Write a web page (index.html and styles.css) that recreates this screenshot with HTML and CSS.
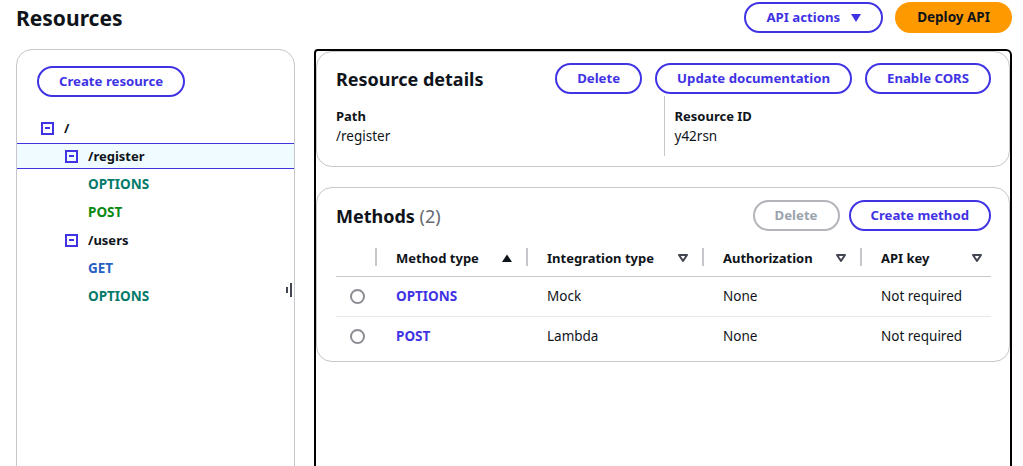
FILE: index.html
```html
<!DOCTYPE html>
<html lang="en">
<head>
<meta charset="utf-8">
<title>Resources</title>
<link rel="stylesheet" href="styles.css">
</head>
<body>
<div class="page">
  <header class="top">
    <h1 class="title">Resources</h1>
    <div class="actions">
      <button class="btn">API actions
        <svg class="caret" width="10" height="8" viewBox="0 0 10 8"><path d="M0 0h10L5 8z" fill="currentColor"/></svg>
      </button>
      <button class="btn primary">Deploy API</button>
    </div>
  </header>

  <div class="layout">
    <aside class="nav-panel">
      <button class="btn create">Create resource</button>
      <ul class="tree">
        <li class="node lvl0"><span class="toggle"></span><span class="res">/</span></li>
        <li class="node lvl1 selected"><span class="toggle"></span><span class="res">/register</span></li>
        <li class="node method m-options">OPTIONS</li>
        <li class="node method m-post">POST</li>
        <li class="node lvl1"><span class="toggle"></span><span class="res">/users</span></li>
        <li class="node method m-get">GET</li>
        <li class="node method m-options">OPTIONS</li>
      </ul>
      <span class="resize-handle"><i class="bar short"></i><i class="bar tall"></i></span>
    </aside>

    <main class="detail-panel">
      <section class="card details">
        <div class="card-head">
          <h2 class="card-title">Resource details</h2>
          <div class="btn-group">
            <button class="btn">Delete</button>
            <button class="btn">Update documentation</button>
            <button class="btn">Enable CORS</button>
          </div>
        </div>
        <div class="kv">
          <div class="kv-col">
            <div class="kv-label">Path</div>
            <div class="kv-value">/register</div>
          </div>
          <div class="kv-col divided">
            <div class="kv-label">Resource ID</div>
            <div class="kv-value">y42rsn</div>
          </div>
        </div>
      </section>

      <section class="card methods">
        <div class="card-head">
          <h2 class="card-title">Methods <span class="count">(2)</span></h2>
          <div class="btn-group tight">
            <button class="btn disabled">Delete</button>
            <button class="btn">Create method</button>
          </div>
        </div>
        <table class="table">
          <colgroup>
            <col class="c-sel"><col class="c-type"><col class="c-int"><col class="c-auth"><col class="c-key">
          </colgroup>
          <thead>
            <tr>
              <th></th>
              <th><div class="th-inner"><span>Method type</span>
                <svg class="sort" width="12" height="10" viewBox="0 0 12 10"><path d="M1 9L6 1.5 11 9z" fill="#0f141a"/></svg></div></th>
              <th><div class="th-inner"><span>Integration type</span>
                <svg class="sort" width="12" height="10" viewBox="0 0 12 10"><path d="M2 2h8L6 8z" fill="none" stroke="#424650" stroke-width="2" stroke-linejoin="round"/></svg></div></th>
              <th><div class="th-inner"><span>Authorization</span>
                <svg class="sort" width="12" height="10" viewBox="0 0 12 10"><path d="M2 2h8L6 8z" fill="none" stroke="#424650" stroke-width="2" stroke-linejoin="round"/></svg></div></th>
              <th class="last"><div class="th-inner"><span>API key</span>
                <svg class="sort" width="12" height="10" viewBox="0 0 12 10"><path d="M2 2h8L6 8z" fill="none" stroke="#424650" stroke-width="2" stroke-linejoin="round"/></svg></div></th>
            </tr>
          </thead>
          <tbody>
            <tr>
              <td class="sel"><span class="radio"></span></td>
              <td><a class="link">OPTIONS</a></td>
              <td>Mock</td>
              <td>None</td>
              <td>Not required</td>
            </tr>
            <tr>
              <td class="sel"><span class="radio"></span></td>
              <td><a class="link">POST</a></td>
              <td>Lambda</td>
              <td>None</td>
              <td>Not required</td>
            </tr>
          </tbody>
        </table>
      </section>
    </main>
  </div>
</div>
</body>
</html>
```

FILE: styles.css
```css
* { box-sizing: border-box; }

html, body {
  margin: 0;
  padding: 0;
}

body {
  font-family: "Noto Sans", "Open Sans", sans-serif;
  font-size: 13.5px;
  line-height: 20px;
  color: #0f141a;
  background: #ffffff;
  height: 466px;
  overflow: hidden;
}

/* ---------- header ---------- */
.top {
  display: flex;
  justify-content: space-between;
  align-items: center;
  height: 35px;
  padding: 0 11px 0 16px;
}

.title {
  margin: 0;
  font-size: 21px;
  line-height: 28px;
  font-weight: 700;
}

.actions {
  display: flex;
  gap: 12px;
}

/* ---------- buttons ---------- */
.btn {
  display: inline-flex;
  align-items: center;
  justify-content: center;
  gap: 11px;
  height: 31px;
  padding: 0 20px;
  border: 2px solid #3f33e4;
  border-radius: 20px;
  background: #ffffff;
  color: #3f33e4;
  font-family: inherit;
  font-size: 13.2px;
  font-weight: 700;
  line-height: 1;
  cursor: pointer;
  white-space: nowrap;
}

.btn.primary {
  background: #ff9900;
  border-color: #ff9900;
  color: #0f141a;
  font-size: 13.5px;
}

.btn.disabled {
  border-color: #b4b4bb;
  color: #9ba3ad;
  cursor: default;
}

.caret {
  display: block;
}

/* ---------- layout ---------- */
.layout {
  display: flex;
  gap: 19px;
  padding: 0 11px 0 16px;
  margin-top: 14px;
}

/* ---------- navigation panel ---------- */
.nav-panel {
  position: relative;
  flex: none;
  width: 279px;
  height: 440px;
  border: 1px solid #c6c6cd;
  border-radius: 16px;
  padding-top: 16px;
}

.btn.create {
  margin-left: 20px;
}

.tree {
  list-style: none;
  margin: 17px 0 0;
  padding: 0;
}

.node {
  display: flex;
  align-items: center;
  height: 28px;
  font-weight: 700;
  font-size: 13.5px;
}

.node.lvl0 { padding-left: 24px; }
.node.lvl1 { padding-left: 48px; }
.node.method { padding-left: 71px; }

.node.selected {
  height: 26px;
  margin: 1px 0;
  background: #f0fbff;
  border-top: 1px solid #3f33e4;
  border-bottom: 1px solid #3f33e4;
}

.res {
  color: #0f141a;
  font-size: 13px;
}

.toggle {
  position: relative;
  flex: none;
  width: 13px;
  height: 13px;
  border: 2px solid #3f33e4;
  margin-right: 10px;
}

.toggle::after {
  content: "";
  position: absolute;
  left: 2px;
  top: 3.5px;
  width: 5px;
  height: 2px;
  background: #3f33e4;
}

.m-options { color: #067a6a; }
.m-post { color: #0a8a12; }
.m-get { color: #2560c2; }

.resize-handle {
  position: absolute;
  right: 2px;
  top: 233px;
  display: flex;
  align-items: center;
  gap: 2px;
}

.bar {
  display: block;
  width: 2px;
  background: #424650;
}

.bar.short { height: 6px; }
.bar.tall { height: 14px; }

/* ---------- detail panel ---------- */
.detail-panel {
  flex: 1;
  height: 440px;
  border: 2px solid #000000;
  border-radius: 4px 6px 0 0;
  display: flex;
  flex-direction: column;
  gap: 20px;
}

.card {
  border: 1px solid #c6c6cd;
  border-radius: 16px;
  background: #ffffff;
}

.details {
  padding: 11px 18px 10px 19px;
}

.card-head {
  display: flex;
  justify-content: space-between;
  align-items: center;
}

.card-title {
  margin: 0;
  font-size: 18px;
  line-height: 24px;
  font-weight: 700;
}

.count {
  font-weight: 400;
  color: #656871;
}

.btn-group {
  display: flex;
  gap: 13px;
}

.btn-group.tight {
  gap: 9px;
}

.kv {
  display: grid;
  grid-template-columns: 1fr 1fr;
  margin-top: 2px;
}

.kv-col {
  padding: 10px 0;
}

.kv-col.divided {
  border-left: 1px solid #c6c6cd;
  padding-left: 10px;
}

.kv-label {
  font-weight: 700;
  font-size: 13px;
  line-height: 20px;
}

.kv-value {
  line-height: 20px;
}

/* ---------- methods ---------- */
.methods {
  padding: 12px 18px 5px 19px;
}

.table {
  width: 100%;
  border-collapse: collapse;
  table-layout: fixed;
  margin-top: 9px;
}

.c-sel { width: 40px; }
.c-type { width: 151px; }
.c-int { width: 176px; }
.c-auth { width: 158px; }
.c-key { width: 130px; }

.table th {
  height: 36px;
  padding: 0;
  text-align: left;
  font-size: 13px;
  font-weight: 700;
  border-bottom: 1px solid #c6c6cd;
  vertical-align: middle;
}

.th-inner {
  position: relative;
  display: flex;
  align-items: center;
  justify-content: space-between;
  padding: 0 14px 0 20px;
}

.th-inner::before {
  content: "";
  position: absolute;
  left: -1px;
  top: 0;
  width: 2px;
  height: 18px;
  background: #c6c6cd;
}

.last .th-inner {
  padding-right: 8px;
}

.sort {
  display: block;
  flex: none;
}

.table td {
  height: 40px;
  padding: 0 0 0 20px;
  border-bottom: 1px solid #e6e7ea;
  vertical-align: middle;
}

.table tbody tr:last-child td {
  border-bottom: none;
}

.table td.sel {
  padding-left: 14px;
}

.radio {
  display: block;
  width: 15px;
  height: 15px;
  border: 2px solid #8c8c94;
  border-radius: 50%;
}

.link {
  color: #3f33e4;
  font-weight: 700;
  text-decoration: none;
}
```
